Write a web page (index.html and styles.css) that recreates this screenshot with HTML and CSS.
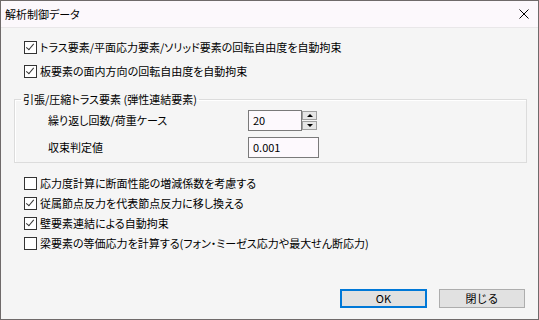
FILE: index.html
```html
<!DOCTYPE html>
<html lang="ja">
<head>
  <meta charset="UTF-8">
  <title>解析制御データ</title>
  <link rel="stylesheet" href="styles.css">
</head>
<body>
  <div class="window">
    <div class="titlebar">
      <span class="title">解析制御データ</span>
      <svg class="close-icon" width="10" height="10" viewBox="0 0 10 10">
        <path d="M0.5 0.5 L9.5 9.5 M9.5 0.5 L0.5 9.5" stroke="#000" stroke-width="1" fill="none"/>
      </svg>
    </div>

    <div class="content">
      <label class="check-row tall">
        <span class="checkbox checked"></span>
        <span>トラス要素/平面応力要素/ソリッド要素の回転自由度を自動拘束</span>
      </label>
      <label class="check-row tall">
        <span class="checkbox checked"></span>
        <span>板要素の面内方向の回転自由度を自動拘束</span>
      </label>

      <fieldset class="group">
        <legend>引張/圧縮トラス要素 (弾性連結要素)</legend>
        <div class="field-row">
          <span class="field-label">繰り返し回数/荷重ケース</span>
          <div class="spinner">
            <span class="textbox short">20</span>
            <span class="spin-buttons">
              <span class="spin-btn"><span class="arrow up"></span></span>
              <span class="spin-btn"><span class="arrow down"></span></span>
            </span>
          </div>
        </div>
        <div class="field-row">
          <span class="field-label">収束判定値</span>
          <span class="textbox">0.001</span>
        </div>
      </fieldset>

      <div class="options">
        <label class="check-row">
          <span class="checkbox"></span>
          <span>応力度計算に断面性能の増減係数を考慮する</span>
        </label>
        <label class="check-row">
          <span class="checkbox checked"></span>
          <span>従属節点反力を代表節点反力に移し換える</span>
        </label>
        <label class="check-row">
          <span class="checkbox checked"></span>
          <span>壁要素連結による自動拘束</span>
        </label>
        <label class="check-row">
          <span class="checkbox"></span>
          <span>梁要素の等価応力を計算する(フォン・ミーゼス応力や最大せん断応力)</span>
        </label>
      </div>

      <div class="footer">
        <button class="btn default">OK</button>
        <button class="btn">閉じる</button>
      </div>
    </div>
  </div>
</body>
</html>
```

FILE: styles.css
```css
body {
  margin: 0;
  padding: 0;
  font-family: "Noto Sans CJK JP", "Noto Sans", sans-serif;
  font-size: 11px;
  font-feature-settings: "palt";
  color: #000;
  background: #fff;
}

.window {
  box-sizing: border-box;
  width: 539px;
  height: 320px;
  border: 1px solid #6f6a6a;
  display: flex;
  flex-direction: column;
  background: #f5f5f5;
}

.titlebar {
  height: 26px;
  background: #fcf8fc;
  border-bottom: 1px solid #e9e7e9;
  display: flex;
  align-items: center;
  justify-content: space-between;
  padding: 0 9px 0 4px;
}

.close-icon {
  display: block;
}

.content {
  flex: 1;
  display: flex;
  flex-direction: column;
  padding: 7px 13px 11px 23px;
}

.check-row {
  display: flex;
  align-items: center;
  gap: 3px;
  height: 20px;
  white-space: nowrap;
}

.check-row.tall {
  height: 24px;
}

.checkbox {
  box-sizing: border-box;
  width: 13px;
  height: 13px;
  border: 1px solid #333;
  background: #fff;
  flex: none;
  position: relative;
}

.checkbox.checked::after {
  content: "";
  position: absolute;
  left: 3px;
  top: 0px;
  width: 3px;
  height: 7px;
  border: solid #333;
  border-width: 0 1px 1px 0;
  transform: rotate(40deg);
}

.group {
  margin: 8px 0 0 -10px;
  padding: 3px 0 5px 33px;
  border: 1px solid #dcdcdc;
  box-shadow: inset 1px 1px #fff;
  width: 478px;
}

.group legend {
  padding: 0 2px;
  margin-left: -27px;
  line-height: 16px;
}

.field-row {
  display: flex;
  align-items: center;
  height: 20px;
  margin-top: 7px;
}

.field-row:first-of-type {
  margin-top: 0;
}

.field-label {
  width: 200px;
}

.textbox {
  box-sizing: border-box;
  width: 71px;
  height: 21px;
  border: 1px solid #7a7a7a;
  background: #fdf9fd;
  padding: 0 4px;
  display: flex;
  align-items: center;
}

.textbox.short {
  width: 54px;
}

.spinner {
  display: flex;
}

.spin-buttons {
  display: flex;
  flex-direction: column;
  gap: 1px;
  padding: 1px 0 1px 0;
}

.spin-btn {
  box-sizing: border-box;
  width: 15px;
  height: 9px;
  border: 1px solid #a0a0a0;
  background: #e6e6e6;
  display: flex;
  align-items: center;
  justify-content: center;
}

.arrow {
  width: 0;
  height: 0;
  border-left: 3px solid transparent;
  border-right: 3px solid transparent;
}

.arrow.up {
  border-bottom: 3px solid #000;
}

.arrow.down {
  border-top: 3px solid #000;
}

.options {
  margin-top: 10px;
}

.footer {
  margin-top: auto;
  display: flex;
  justify-content: flex-end;
  gap: 12px;
}

.btn {
  box-sizing: border-box;
  width: 86px;
  height: 19px;
  font-family: inherit;
  font-size: 11px;
  background: #e1e1e1;
  border: 1px solid #adadad;
  padding: 0;
  line-height: 1;
  color: #000;
}

.btn.default {
  width: 87px;
  border: 2px solid #0078d7;
}
```
